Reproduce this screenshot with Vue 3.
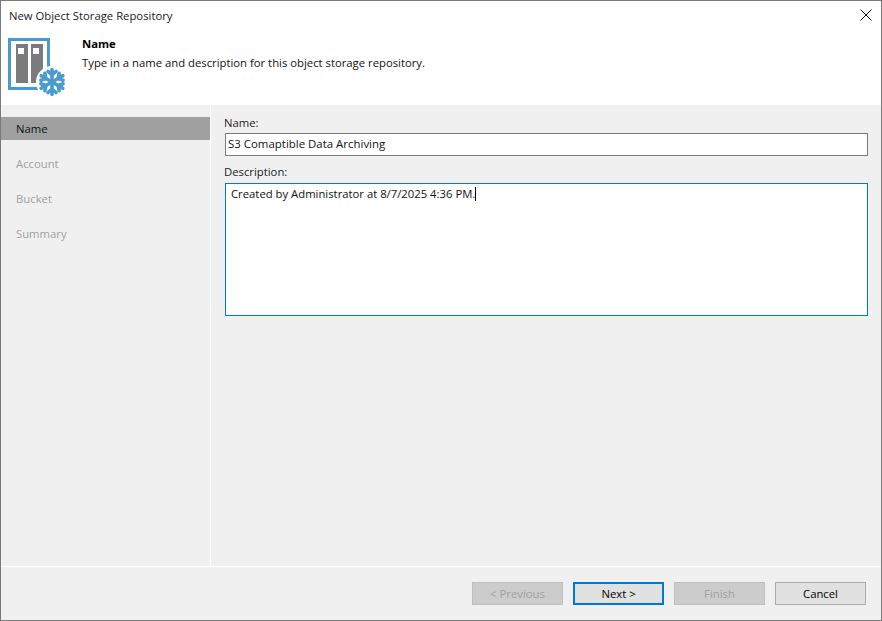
<template>
  <div class="window">
    <div class="titlebar">
      <span class="title">New Object Storage Repository</span>
      <svg class="close" width="12" height="12" viewBox="0 0 12 12"><path d="M.5.5l11 11M11.5.5l-11 11" stroke="#111" stroke-width="1" fill="none"/></svg>
    </div>
    <div class="header">
      <svg class="logo" width="70" height="70" viewBox="0 0 70 70">
        <rect x="8.500" y="8.500" width="39" height="49" fill="#fff" stroke="#4a9bcd" stroke-width="3"/>
        <rect x="15" y="13" width="12" height="39" fill="#7b7b7b"/>
        <rect x="30" y="13" width="12" height="39" fill="#7b7b7b"/>
        <rect x="17" y="17" width="6" height="6" fill="#fff"/>
        <rect x="32" y="17" width="6" height="6" fill="#fff"/>
        <circle cx="51" cy="51" r="16" fill="#fff"/>
        <g stroke="#4a9bcd" stroke-width="3.600" fill="none" stroke-linecap="round" stroke-linejoin="round">
          <g v-for="a in angles" :key="a" :transform="`rotate(${a} 51 51)`">
            <path d="M51 51V38.500M47 40.500l4 3.500 4-3.500"/>
          </g>
        </g>
      </svg>
      <div class="heading">
        <div class="heading-title">Name</div>
        <div class="heading-sub">Type in a name and description for this object storage repository.</div>
      </div>
    </div>
    <div class="body">
      <nav class="sidebar">
        <div v-for="(s, i) in steps" :key="s" class="step" :class="{ active: i === 0 }">{{ s }}</div>
      </nav>
      <main class="content">
        <label class="label">Name:</label>
        <div class="field name">S3 Comaptible Data Archiving</div>
        <label class="label desc-label">Description:</label>
        <div class="field desc">Created by Administrator at 8/7/2025 4:36 PM.<span class="caret"></span></div>
      </main>
    </div>
    <div class="footer">
      <button class="btn disabled">&lt; Previous</button>
      <button class="btn focus">Next &gt;</button>
      <button class="btn disabled">Finish</button>
      <button class="btn">Cancel</button>
    </div>
  </div>
</template>

<script setup>
const steps = ['Name', 'Account', 'Bucket', 'Summary']
const angles = [0, 60, 120, 180, 240, 300]
</script>

<style>
html, body { margin: 0; padding: 0; background: #f0f0f0; }
</style>

<style scoped>
.window {
  box-sizing: border-box;
  width: 882px;
  height: 621px;
  border: 1px solid #7a7a7a;
  background: #f0f0f0;
  display: flex;
  flex-direction: column;
  font-family: "Open Sans", "Noto Sans", sans-serif;
  font-size: 11.3px;
  color: #111;
  overflow: hidden;
}
.titlebar {
  height: 28px;
  flex: none;
  background: #fff;
  display: flex;
  align-items: center;
  justify-content: space-between;
  padding: 0 9px 0 8px;
}
.title { color: #1a1a1a; }
.header {
  height: 76px;
  flex: none;
  background: #fff;
  display: flex;
  position: relative;
}
.logo { position: absolute; left: 0; top: 2px; }
.heading { margin-left: 81px; padding-top: 7px; }
.heading-title { font-weight: 700; line-height: 16px; color: #000; }
.heading-sub { line-height: 16px; margin-top: 3px; }
.body { flex: 1; display: flex; min-height: 0; border-bottom: 1px solid #fff; }
.sidebar {
  width: 209px;
  flex: none;
  border-right: 1px solid #fff;
  padding-top: 12px;
  display: flex;
  flex-direction: column;
  gap: 12px;
}
.step {
  height: 23px;
  line-height: 23px;
  padding-left: 15px;
  color: #a0a0a0;
}
.step.active { background: #a0a0a0; color: #111; }
.content {
  flex: 1;
  padding: 10px 13px 0 14px;
  display: flex;
  flex-direction: column;
}
.label { line-height: 16px; color: #222; margin-left: -1px; }
.desc-label { margin-top: 8px; }
.field {
  box-sizing: border-box;
  background: #fff;
  border: 1px solid #7a7a7a;
  margin-top: 2px;
}
.name { height: 23px; line-height: 20px; padding-left: 2px; font-size: 11.45px; }
.desc {
  height: 133px;
  margin-top: 3px;
  border-color: #0078d7;
  padding: 2px 5px;
  line-height: 16px;
}
.caret {
  display: inline-block;
  width: 1px;
  height: 14px;
  background: #000;
  vertical-align: -3px;
}
.footer {
  height: 53px;
  flex: none;
  display: flex;
  justify-content: flex-end;
  align-items: flex-start;
  gap: 10px;
  padding: 15px 15px 0 0;
  box-sizing: border-box;
}
.btn {
  box-sizing: border-box;
  width: 91px;
  height: 23px;
  font: inherit;
  color: #000;
  background: #e1e1e1;
  border: 1px solid #adadad;
  padding: 0;
}
.btn.disabled { background: #cccccc; border-color: #bfbfbf; color: #a0a0a0; }
.btn.focus { border: 2px solid #0078d7; }
</style>
